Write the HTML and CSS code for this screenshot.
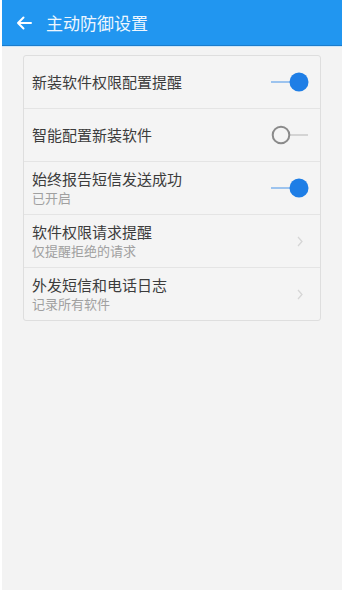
FILE: index.html
```html
<!DOCTYPE html>
<html lang="zh">
<head>
<meta charset="utf-8">
<link rel="stylesheet" href="styles.css">
</head>
<body>
<div class="phone">
  <header class="bar">
    <svg class="back" width="16" height="14" viewBox="0 0 16 14"><path d="M15 7H2M7.5 1.5L2 7l5.5 5.5" fill="none" stroke="#fff" stroke-width="2" stroke-linecap="round" stroke-linejoin="round"/></svg>
    <span class="title">主动防御设置</span>
  </header>
  <div class="card">
    <div class="row">
      <div class="text"><div class="main">新装软件权限配置提醒</div></div>
      <svg class="toggle" width="40" height="22" viewBox="0 0 40 22"><line x1="1" y1="11" x2="20" y2="11" stroke="#9cc3ee" stroke-width="2"/><circle cx="29" cy="11" r="9.5" fill="#1e7ee6"/></svg>
    </div>
    <div class="row">
      <div class="text"><div class="main">智能配置新装软件</div></div>
      <svg class="toggle" width="40" height="22" viewBox="0 0 40 22"><line x1="20" y1="11" x2="38" y2="11" stroke="#d4d4d4" stroke-width="2"/><circle cx="11" cy="11" r="8.3" fill="none" stroke="#8a8a8a" stroke-width="2"/></svg>
    </div>
    <div class="row">
      <div class="text"><div class="main">始终报告短信发送成功</div><div class="sub">已开启</div></div>
      <svg class="toggle" width="40" height="22" viewBox="0 0 40 22"><line x1="1" y1="11" x2="20" y2="11" stroke="#9cc3ee" stroke-width="2"/><circle cx="29" cy="11" r="9.5" fill="#1e7ee6"/></svg>
    </div>
    <div class="row">
      <div class="text"><div class="main">软件权限请求提醒</div><div class="sub">仅提醒拒绝的请求</div></div>
      <svg class="chev" width="6" height="11" viewBox="0 0 6 11"><path d="M1 1l4 4.5L1 10" fill="none" stroke="#d6d6d6" stroke-width="1.3"/></svg>
    </div>
    <div class="row">
      <div class="text"><div class="main">外发短信和电话日志</div><div class="sub">记录所有软件</div></div>
      <svg class="chev" width="6" height="11" viewBox="0 0 6 11"><path d="M1 1l4 4.5L1 10" fill="none" stroke="#d6d6d6" stroke-width="1.3"/></svg>
    </div>
  </div>
</div>
</body>
</html>
```
FILE: styles.css
```css
html, body {
  margin: 0;
  padding: 0;
  background: #ffffff;
}
body {
  font-family: "Noto Sans CJK SC", "Noto Sans", sans-serif;
}
.phone {
  margin-left: 2px;
  width: 340px;
  height: 590px;
  background: #f3f3f3;
  overflow: hidden;
}
.bar {
  height: 45px;
  background: #2196f0;
  border-bottom: 1px solid #1a7ccc;
  box-shadow: 0 1px 0 #cfe6f8;
  display: flex;
  align-items: center;
  padding-left: 14px;
}
.back {
  display: block;
}
.title {
  margin-left: 14px;
  color: #eef6fe;
  font-size: 17px;
  line-height: 20px;
}
.card {
  margin: 9px 0 0 21px;
  width: 296px;
  border: 1px solid #dedede;
  border-radius: 3px;
  background: #f4f4f4;
}
.row {
  height: 52px;
  display: flex;
  align-items: center;
  padding: 0 12px 0 8px;
  border-top: 1px solid #e4e4e4;
}
.row:first-child {
  border-top: none;
}
.text {
  flex: 1;
}
.main {
  font-size: 15px;
  line-height: 20px;
  color: #3c3c3c;
}
.sub {
  font-size: 13px;
  line-height: 18px;
  color: #a0a0a0;
}
.toggle {
  display: block;
  margin-right: -2px;
}
.chev {
  display: block;
  margin-right: 5px;
}
```
